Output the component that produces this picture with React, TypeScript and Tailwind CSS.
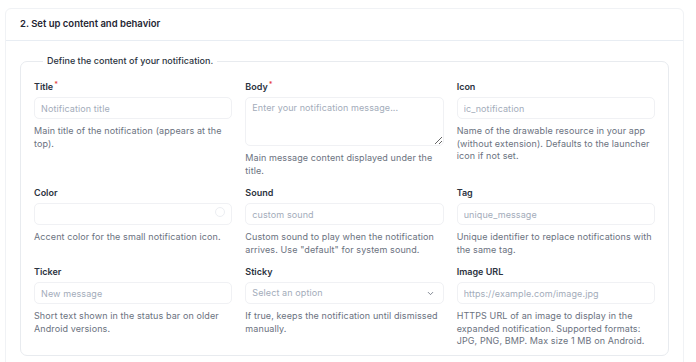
import { ChevronDown } from "lucide-react"

type Field = {
  label: string
  required?: boolean
  placeholder?: string
  help: string
  kind?: "input" | "textarea" | "color" | "select"
}

const rows: Field[][] = [
  [
    { label: "Title", required: true, placeholder: "Notification title", help: "Main title of the notification (appears at the top)." },
    { label: "Body", required: true, placeholder: "Enter your notification message...", help: "Main message content displayed under the title.", kind: "textarea" },
    { label: "Icon", placeholder: "ic_notification", help: "Name of the drawable resource in your app (without extension). Defaults to the launcher icon if not set." },
  ],
  [
    { label: "Color", help: "Accent color for the small notification icon.", kind: "color" },
    { label: "Sound", placeholder: "custom sound", help: 'Custom sound to play when the notification arrives. Use "default" for system sound.' },
    { label: "Tag", placeholder: "unique_message", help: "Unique identifier to replace notifications with the same tag." },
  ],
  [
    { label: "Ticker", placeholder: "New message", help: "Short text shown in the status bar on older Android versions." },
    { label: "Sticky", placeholder: "Select an option", help: "If true, keeps the notification until dismissed manually.", kind: "select" },
    { label: "Image URL", placeholder: "https://example.com/image.jpg", help: "HTTPS URL of an image to display in the expanded notification. Supported formats: JPG, PNG, BMP. Max size 1 MB on Android." },
  ],
]

const inputCls =
  "w-full h-[22px] rounded-[5px] border border-[#f0f1f4] bg-white px-[6px] text-[9px] tracking-[0.1px] text-[#2d3748] placeholder:text-[#a3acba] outline-none"

function FieldBox({ f }: { f: Field }) {
  return (
    <div className="flex flex-col">
      <label className="h-[12px] leading-[12px] text-[9px] font-semibold text-[#2b3340] mb-[4px]">
        {f.label}
        {f.required && <sup className="text-[#e53e3e] text-[7px] ml-[1px] -top-[3px]">*</sup>}
      </label>
      {f.kind === "textarea" ? (
        <textarea
          placeholder={f.placeholder}
          className="w-full h-[49px] rounded-[5px] border border-[#f0f1f4] bg-white px-[6px] py-[4px] text-[9px] tracking-[0.1px] leading-[12px] placeholder:text-[#a3acba] outline-none resize-y"
        />
      ) : f.kind === "select" ? (
        <div className={inputCls + " flex items-center justify-between"}>
          <span className="text-[#a3acba]">{f.placeholder}</span>
          <ChevronDown size={9} strokeWidth={2} className="text-[#5a6270] mr-[2px]" />
        </div>
      ) : f.kind === "color" ? (
        <div className={inputCls + " relative"}>
          <span className="absolute right-[6px] top-[3px] w-[10px] h-[10px] rounded-full border border-[#eceef2]" />
        </div>
      ) : (
        <input placeholder={f.placeholder} className={inputCls} />
      )}
      <p className="mt-[6px] text-[9px] tracking-[0.1px] leading-[12.5px] text-[#6b7280]">{f.help}</p>
    </div>
  )
}

export default function App() {
  return (
    <div className="w-[696px] h-[362px] overflow-hidden bg-white pt-[8px] pl-[5px] pr-[12px]" style={{ fontFamily: "Inter, 'Noto Sans', sans-serif" }}>
      <div className="border border-[#f0f2f5] rounded-t-[6px] h-[380px]">
        <div className="h-[32px] flex items-center px-[14px] border-b border-[#e8edf3] text-[9.5px] font-semibold text-[#1f2633]">
          2. Set up content and behavior
        </div>
        <div className="pt-[14px] px-[14px]">
          <fieldset className="border border-[#e8ebef] rounded-[7px] px-[13px] pb-[7px]">
            <legend className="ml-[9px] px-[4px] text-[9px] leading-[12px] font-medium text-[#2b3340]">
              Define the content of your notification.
            </legend>
            <div className="pt-[14px] flex flex-col gap-[10px]">
              {rows.map((r, i) => (
                <div key={i} className="grid grid-cols-3 gap-x-[13px]">
                  {r.map((f) => (
                    <FieldBox key={f.label} f={f} />
                  ))}
                </div>
              ))}
            </div>
          </fieldset>
        </div>
      </div>
    </div>
  )
}
